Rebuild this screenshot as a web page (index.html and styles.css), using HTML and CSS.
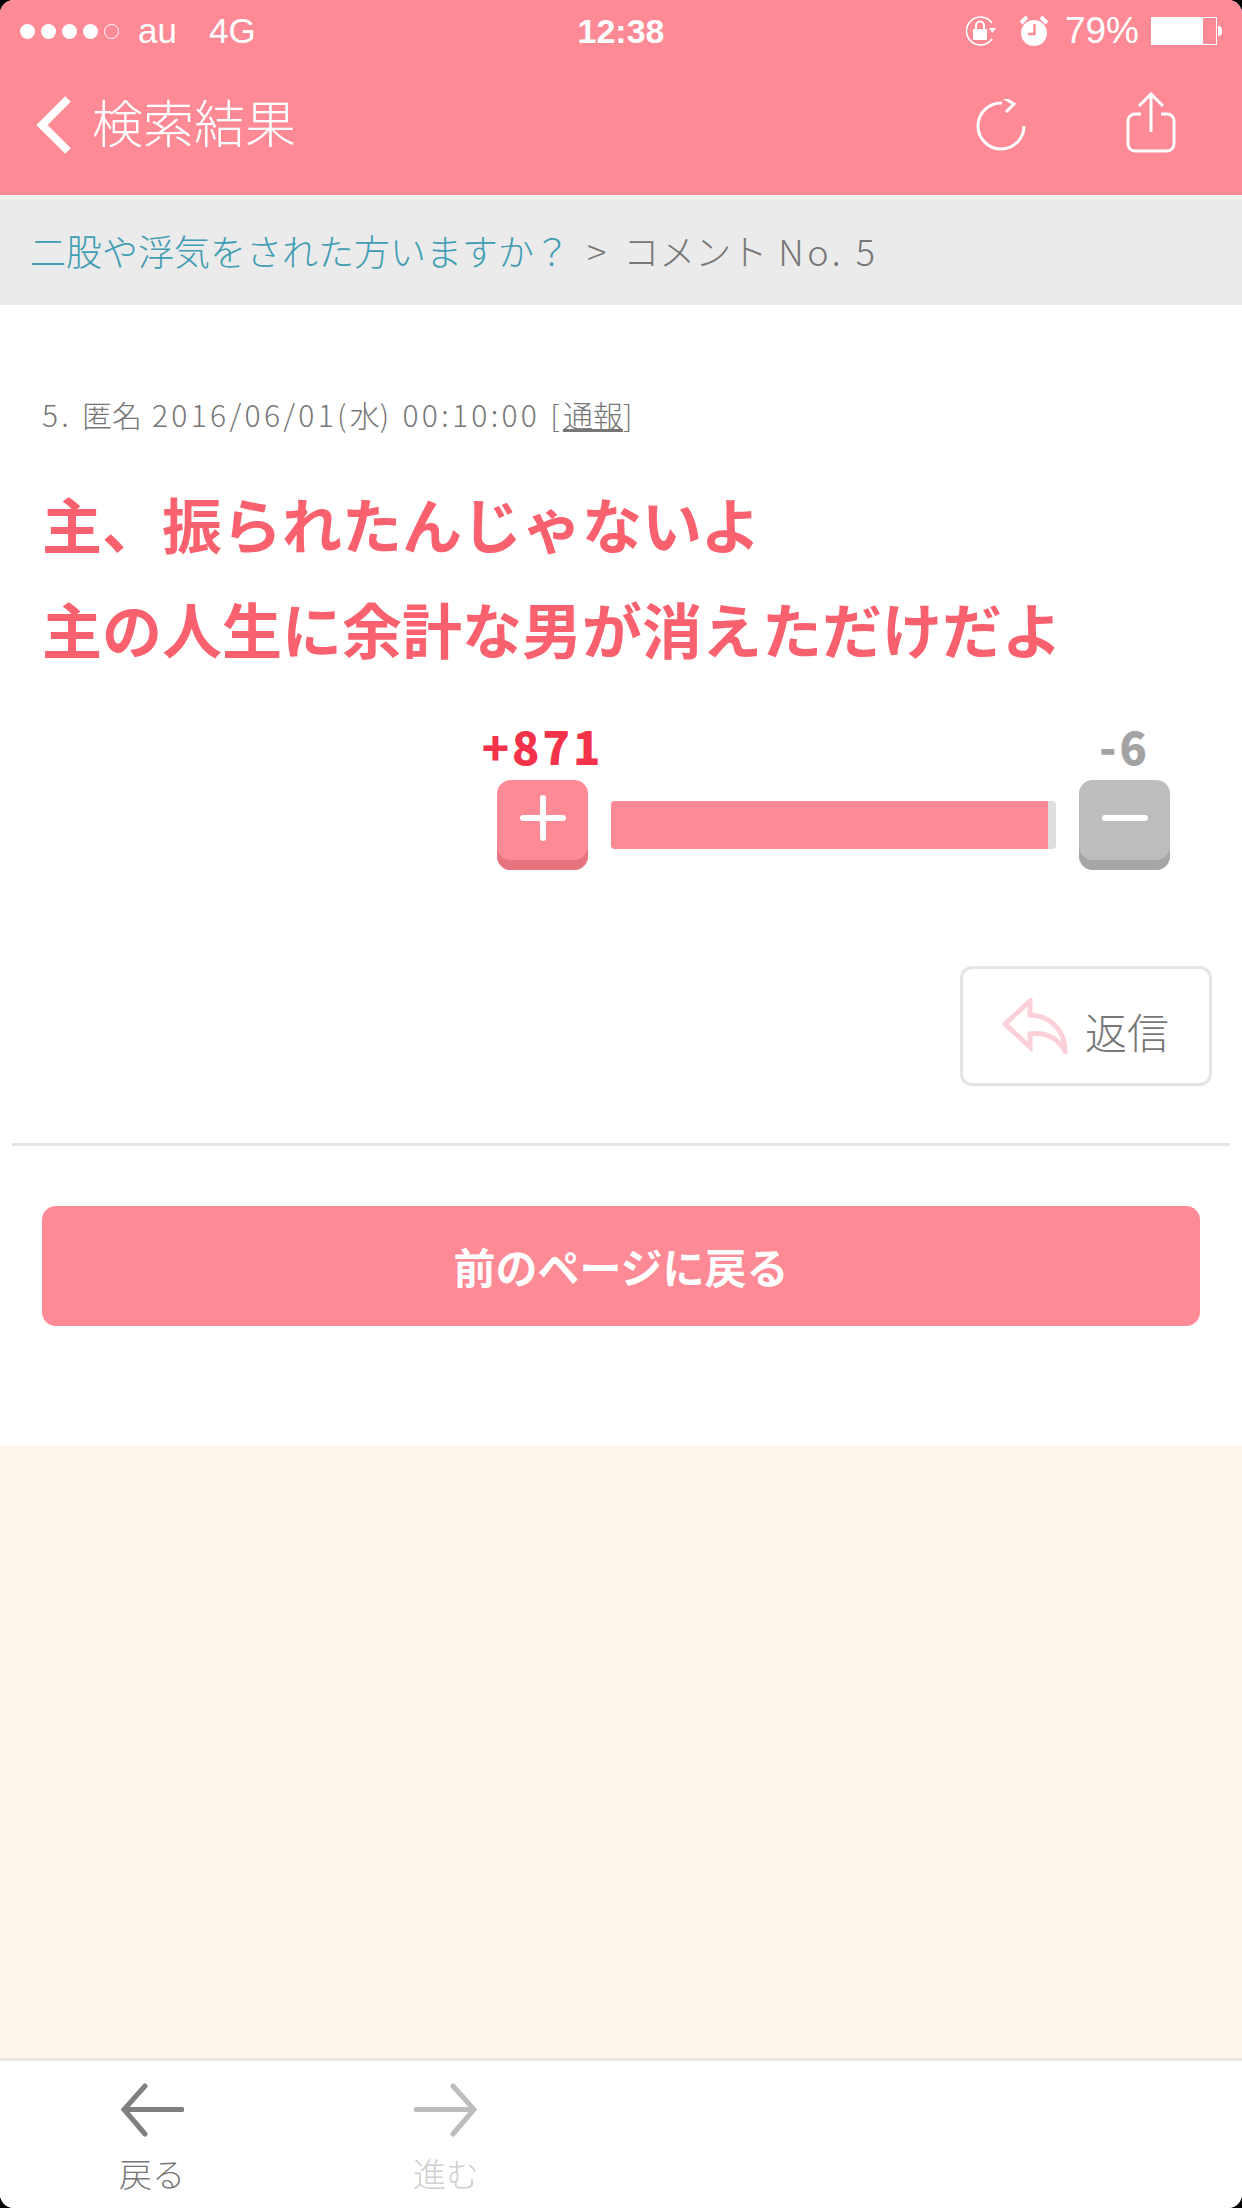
FILE: index.html
```html
<!DOCTYPE html>
<html lang="ja">
<head>
  <meta charset="UTF-8" />
  <title>コメント No. 5</title>
  <link rel="stylesheet" href="styles.css">
</head>
<body>

  <div class="screen">
    <header class="topBar">
      <div class="status">
        <div class="statusLeft">
          <span class="dot"></span><span class="dot"></span><span class="dot"></span><span class="dot"></span><span class="dot dotEmpty"></span>
          <span class="carrier">au</span>
          <span class="network">4G</span>
        </div>
        <div class="clock">12:38</div>
        <div class="statusRight">
          <svg class="iconLock" width="32" height="32" viewBox="0 0 32 32">
            <path d="M27 8 A14 14 0 1 0 27 24" fill="none" stroke="#fff" stroke-width="1.6"/>
            <path d="M24 13 L31 13 L27.5 18 Z" fill="#fff"/>
            <rect x="8" y="14" width="14" height="11" rx="1" fill="#fff"/>
            <path d="M11 14 V10.5 A4 4 0 0 1 19 10.5 V14" fill="none" stroke="#fff" stroke-width="2"/>
          </svg>
          <svg class="iconAlarm" width="30" height="32" viewBox="0 0 30 32">
            <circle cx="15" cy="18" r="13" fill="#fff"/>
            <path d="M2 8 L8 2 M28 8 L22 2" stroke="#fff" stroke-width="4"/>
            <path d="M15.5 9 V19 H9" fill="none" stroke="#fe8a96" stroke-width="2.4"/>
          </svg>
          <span class="battPct">79%</span>
          <div class="battery"><div class="batteryFill"></div></div>
          <div class="batteryNub"></div>
        </div>
      </div>
      <div class="nav">
        <a class="navBack">
          <svg width="36" height="60" viewBox="0 0 36 60"><path d="M32 4 L6 30 L32 56" fill="none" stroke="#fff" stroke-width="8"/></svg>
          <span>検索結果</span>
        </a>
        <div class="navIcons">
          <svg class="iconRefresh" width="50" height="52" viewBox="0 0 50 52">
            <path d="M48 27 A23 23 0 1 1 26 4" fill="none" stroke="#fff" stroke-width="3"/>
            <path d="M28 -1 L38 5 L30 13" fill="none" stroke="#fff" stroke-width="3"/>
          </svg>
          <svg class="iconShare" width="50" height="62" viewBox="0 0 50 62">
            <path d="M15 22 H9 A7 7 0 0 0 2 29 V52 A7 7 0 0 0 9 59 H41 A7 7 0 0 0 48 52 V29 A7 7 0 0 0 41 22 H35" fill="none" stroke="#fff" stroke-width="3"/>
            <path d="M25 40 V3 M13 14 L25 2 L37 14" fill="none" stroke="#fff" stroke-width="3"/>
          </svg>
        </div>
      </div>
    </header>

    <div class="crumb">
      <a class="crumbLink">二股や浮気をされた方いますか？</a>
      <span class="crumbSep">&gt;</span>
      <span>コメント <span class="crumbNo">No. 5</span></span>
    </div>

    <main class="content">
      <div class="meta">5. <span class="ja">匿名</span> 2016/06/01(<span class="ja">水</span>) 00:10:00 [<u class="ja">通報</u>]</div>
      <div class="commentText">主、振られたんじゃないよ<br>主の人生に余計な男が消えただけだよ</div>

      <div class="vote">
        <div class="count countPlus">+871</div>
        <div class="count countMinus">-6</div>
        <button class="voteBtn votePlus">
          <svg width="46" height="46" viewBox="0 0 46 46"><path d="M23 3 V43 M3 23 H43" stroke="#fff" stroke-width="6" stroke-linecap="round"/></svg>
        </button>
        <div class="voteBar"><div class="voteFill" style="width: 98.2%"></div></div>
        <button class="voteBtn voteMinus">
          <svg width="46" height="46" viewBox="0 0 46 46"><path d="M3 23 H43" stroke="#fff" stroke-width="6" stroke-linecap="round"/></svg>
        </button>
      </div>

      <a class="replyBtn">
        <svg width="66" height="56" viewBox="0 0 66 56"><path d="M28 3 L3 26 L28 49 V36 C43 34 55 39 63 53 C63 32 49 18 28 17 Z" fill="none" stroke="#fcd0d8" stroke-width="5"/></svg>
        <span>返信</span>
      </a>

      <hr class="divider">

      <a class="backBtn">前のページに戻る</a>
    </main>

    <div class="filler"></div>

    <footer class="tabs">
      <a class="tab">
        <svg width="64" height="54" viewBox="0 0 64 54"><path d="M62 26.500 H5 M25 3 L4 26.500 L25 51" fill="none" stroke="#808080" stroke-width="5" stroke-linecap="round"/></svg>
        <span>戻る</span>
      </a>
      <a class="tab tabOff">
        <svg width="64" height="54" viewBox="0 0 64 54"><path d="M2 26.500 H59 M39 3 L60 26.500 L39 51" fill="none" stroke="#bdbdbd" stroke-width="5" stroke-linecap="round"/></svg>
        <span>進む</span>
      </a>
    </footer>
  </div>

</body>
</html>
```

FILE: styles.css
```css
* {
  box-sizing: border-box;
}

body {
  margin: 0;
  background-color: #000;
  font-family: "Noto Sans CJK JP", "Liberation Sans", sans-serif;
  color: #777;
}

a {
  display: block;
}

.screen {
  width: 1242px;
  height: 2208px;
  display: flex;
  flex-direction: column;
  overflow: hidden;
  border-radius: 14px;
  background-color: #fff;
}

/* top bar */

.topBar {
  height: 195px;
  background-color: #fe8a96;
  color: #fff;
}

.status {
  height: 62px;
  padding: 0 20px;
  display: grid;
  grid-template-columns: 1fr auto 1fr;
  align-items: center;
  font-family: "Liberation Sans", sans-serif;
  font-size: 35px;
}

.statusLeft,
.statusRight {
  display: flex;
  align-items: center;
}

.statusRight {
  justify-content: flex-end;
}

.dot {
  width: 15px;
  height: 15px;
  margin-right: 6px;
  border-radius: 50%;
  background-color: #fff;
}

.dotEmpty {
  background-color: transparent;
  border: 1px solid #fff;
}

.carrier {
  margin-left: 13px;
}

.network {
  margin-left: 32px;
}

.clock {
  font-weight: bold;
  font-size: 34px;
}

.iconLock {
  margin-right: 22px;
}

.iconAlarm {
  margin-right: 16px;
}

.battPct {
  margin-right: 12px;
  font-size: 37px;
}

.battery {
  width: 66px;
  height: 28px;
  margin-right: -1px;
  border: 1px solid #fff;
}

.batteryFill {
  width: 79%;
  height: 100%;
  background-color: #fff;
}

.batteryNub {
  width: 4px;
  height: 10px;
  margin-left: 2px;
  background-color: #fff;
  border-radius: 0 4px 4px 0;
}

.nav {
  height: 133px;
  padding: 0 66px 8px 36px;
  display: flex;
  justify-content: space-between;
  align-items: center;
}

.navBack {
  display: flex;
  align-items: center;
  gap: 20px;
  font-size: 51px;
  font-weight: 300;
  line-height: 1;
}

.navBack span {
  margin-bottom: 6px;
}

.navIcons {
  display: flex;
  align-items: center;
  gap: 100px;
}

.iconShare {
  margin-bottom: 4px;
}

/* breadcrumb */

.crumb {
  height: 110px;
  padding: 0 0 6px 30px;
  display: flex;
  align-items: center;
  gap: 17px;
  border-top: 5px solid #eef0ea;
  background-color: #ebebeb;
  font-size: 36px;
  font-weight: 300;
  white-space: nowrap;
}

.crumbLink {
  color: #3f9db4;
}

.crumbNo {
  margin-left: 3px;
  letter-spacing: 3.5px;
}

/* comment */

.content {
  height: 1141px;
  padding: 89px 42px 0;
}

.meta {
  height: 40px;
  font-size: 30px;
  font-weight: 300;
  line-height: 40px;
  letter-spacing: 3.3px;
  white-space: nowrap;
}

.ja {
  letter-spacing: 0;
}

.commentText {
  margin-top: 36px;
  font-size: 60px;
  font-weight: bold;
  line-height: 105px;
  color: #f9616f;
  white-space: nowrap;
}

.vote {
  margin-top: 41px;
  padding-right: 30px;
  display: grid;
  grid-template-columns: 91px 445px 91px;
  grid-template-rows: 50px 90px;
  column-gap: 23px;
  row-gap: 9px;
  justify-content: end;
}

.count {
  justify-self: center;
  font-size: 45px;
  font-weight: 900;
  line-height: 50px;
  letter-spacing: 3px;
  white-space: nowrap;
}

.countPlus {
  grid-column: 1;
  color: #f4324a;
}

.countMinus {
  grid-column: 3;
  color: #a3a3a3;
}

.voteBtn {
  width: 91px;
  height: 90px;
  padding: 0 0 14px;
  display: flex;
  align-items: center;
  justify-content: center;
  border: none;
  border-radius: 14px;
}

.votePlus {
  background-color: #fe8a96;
  box-shadow: inset 0 -10px 0 #e5747f;
}

.voteMinus {
  background-color: #bdbdbd;
  box-shadow: inset 0 -10px 0 #a6a6a6;
}

.voteBar {
  height: 48px;
  margin-top: 21px;
  border-radius: 4px;
  overflow: hidden;
  background-color: #dedede;
}

.voteFill {
  height: 100%;
  background-color: #fe8a96;
}

.replyBtn {
  width: 252px;
  height: 120px;
  margin: 96px -12px 0 auto;
  padding-right: 1px;
  display: flex;
  align-items: center;
  justify-content: center;
  gap: 17px;
  border: 3px solid #e4e4e4;
  border-radius: 12px;
  font-size: 42px;
  font-weight: 300;
  line-height: 1;
}

.replyBtn span {
  margin-top: 10px;
}

.divider {
  height: 3px;
  margin: 57px -30px 0;
  border: none;
  background-color: #e4e4e4;
}

.backBtn {
  height: 120px;
  margin: 60px 0 0;
  border-radius: 14px;
  background-color: #fe8a96;
  color: #fff;
  font-size: 42px;
  font-weight: bold;
  line-height: 120px;
  text-align: center;
}

.filler {
  flex: 1;
  background-color: #fdf4ea;
}

/* bottom tabs */

.tabs {
  height: 150px;
  padding: 22px 0 0 120px;
  display: flex;
  gap: 230px;
  border-top: 3px solid #ece6e6;
  background-color: #fff;
}

.tab {
  width: 64px;
  display: flex;
  flex-direction: column;
  align-items: center;
  gap: 14px;
  font-size: 33px;
  font-weight: 300;
  line-height: 44px;
  white-space: nowrap;
}

.tabOff {
  color: #cfcfcf;
}
```
